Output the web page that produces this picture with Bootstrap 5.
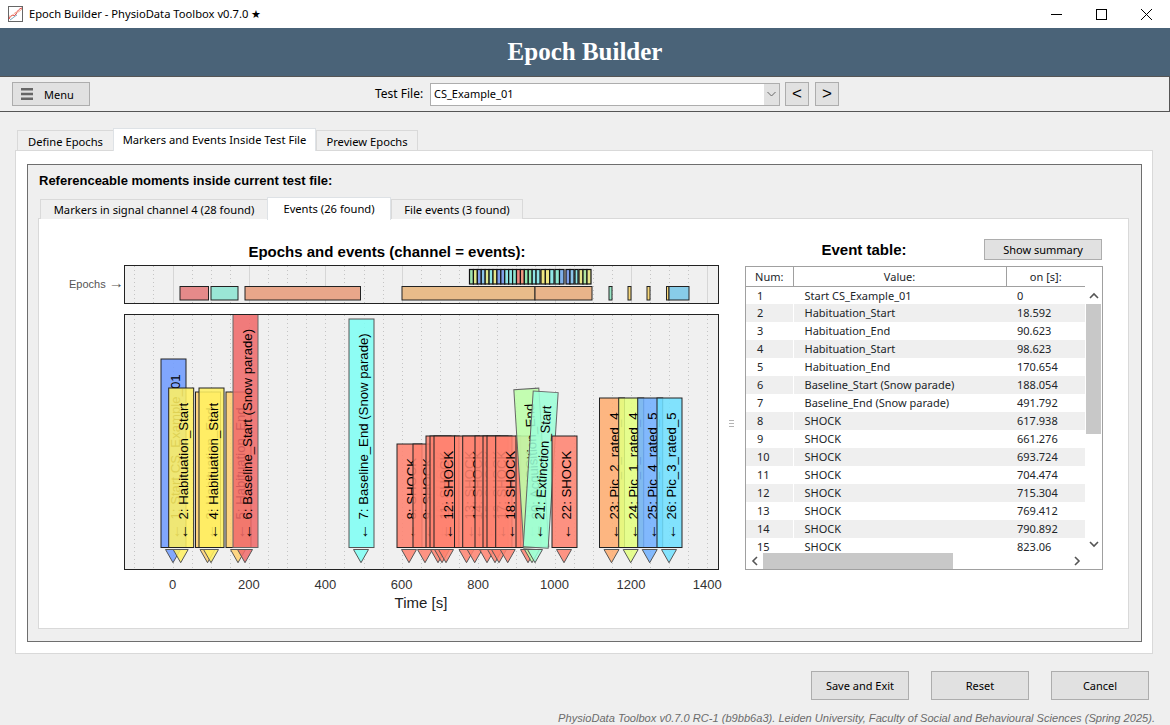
<!DOCTYPE html>
<html lang="en">
  <head>
    <meta charset="UTF-8" />
    <title>Epoch Builder</title>
    <link
      rel="stylesheet"
      href="https://cdn.jsdelivr.net/npm/bootstrap@5.3.0/dist/css/bootstrap.min.css"
    />
    <style>
      body {
        width: 1170px;
        height: 725px;
        overflow: hidden;
        background: #efefef;
        font-family: "Noto Sans", "Liberation Sans", sans-serif;
        font-size: 11px;
        color: #000;
      }
      .win-bar { height: 28px; background: #fff; padding-left: 8px; }
      .win-bar .win-title { margin-left: 6px; font-size: 11.2px; }
      .win-ctrls { margin-left: auto; padding-right: 18px; gap: 34px; }
      .app-head {
        height: 48px;
        background: #4a6378;
        color: #fff;
        font: bold 25px "Liberation Serif", serif;
      }
      .tool-bar {
        height: 36px;
        border: 1px solid #555;
        border-left: 0;
        padding-left: 12px;
      }
      .gui-btn {
        background: #e1e1e1;
        border: 1px solid #adadad;
        border-radius: 0;
        color: #000;
        font-size: 11px;
        padding: 0;
        line-height: 1;
      }
      .menu-btn { width: 78px; height: 24px; gap: 11px; padding-left: 8px; }
      .menu-bars { width: 12px; height: 12px; }
      .file-label { width: 55px; margin-left: 285px; font-size: 12px; white-space: nowrap; }
      .file-box {
        width: 350px;
        height: 23px;
        background: #fff;
        border: 1px solid #adadad;
        padding-left: 3px;
      }
      .file-caret { width: 15px; background: #e1e1e1; }
      .step-btn { width: 24px; height: 24px; font: 17px "Liberation Sans", sans-serif; }
      .prev-btn { margin-left: 5px; }
      .next-btn { margin-left: 6px; }

      .gui-tabs { border: 0; align-items: flex-end; }
      .gui-tabs .nav-link {
        border: 1px solid #d9d9d9;
        border-bottom: 0;
        border-radius: 0;
        margin: 0;
        padding: 0;
        background: #efefef;
        color: #000;
        font-size: 11.2px;
        height: 20px;
        line-height: 22px;
        text-align: center;
      }
      .gui-tabs .nav-link.active {
        background: #fff;
        height: 23px;
        line-height: 21px;
        border-bottom: 0;
        position: relative;
        z-index: 2;
        margin-bottom: -1px;
      }
      .outer-tabs { margin: 16px 0 0 17px; height: 22px; }
      .outer-tabs .tab-a { width: 97px; }
      .outer-tabs .tab-b { width: 203px; margin-left: -1px !important; }
      .outer-tabs .tab-c { width: 102px; margin-left: 0 !important; }
      .outer-panel {
        margin: 0 17px 0 15px;
        height: 504px;
        background: #fff;
        border: 1px solid #d9d9d9;
        padding: 13px 10px 0 11px;
      }
      .group-box {
        height: 478px;
        background: #efefef;
        border: 1px solid #6e6e6e;
        padding: 7px 12px 0 10px;
      }
      .group-title { font: bold 13px/17px "Liberation Sans", sans-serif; margin-left: 1px; }
      .inner-tabs { margin: 8px 0 0 2px; height: 21px; }
      .inner-tabs .nav-link { line-height: 20px; }
      .inner-tabs .tab-a { width: 228px; }
      .inner-tabs .tab-b { width: 124px; margin-left: -1px !important; }
      .inner-tabs .tab-c { width: 132px; }
      .inner-panel {
        height: 411px;
        background: #fff;
        border: 1px solid #d9d9d9;
      }
      .chart-svg { width: 690px; height: 409px; flex: none; }
      .chart-svg text { font-family: "Liberation Sans", Arial, sans-serif; }
      .split-grip { width: 16px; gap: 2px; }
      .split-grip i { width: 5px; height: 1px; background: #b4b4b4; display: block; }
      .table-col { width: 358px; padding-top: 20px; }
      .table-head { height: 21px; margin-bottom: 6px; }
      .table-title {
        font: bold 15px "Liberation Sans", sans-serif;
        width: 238px;
        text-align: center;
      }
      .summary-btn { width: 118px; height: 21px; margin-left: 1px; }

      .table-box {
        height: 304px;
        border: 1px solid #a0a0a0;
        background: #fff;
      }
      .table-clip { width: 339px; height: 285px; overflow: hidden; }
      .ev-table { table-layout: fixed; width: 339px; margin: 0; font-size: 11px; }
      .ev-table.table > thead > tr > th {
        height: 19px;
        padding: 0;
        font-weight: 400;
        text-align: center;
        border: 0;
        border-bottom: 1px solid #a0a0a0;
        border-right: 1px solid #a0a0a0;
        background: #fff;
        box-shadow: none;
      }
      .ev-table.table > thead > tr > th:last-child { border-right: 0; }
      .ev-table.table > tbody > tr > td {
        height: 18px;
        padding: 0 0 0 11px;
        line-height: 17px;
        border: 0;
        background: #fff;
        box-shadow: none;
        white-space: nowrap;
      }
      .ev-table.table > tbody > tr > td:first-child { border-right: 1px solid #fff; }
      .ev-table.table > tbody > tr:nth-child(even) > td { background: #efefef; }
      .hscroll { width: 339px; height: 17px; padding: 0 4px 0 5px; }
      .hscroll-thumb { width: 190px; height: 16px; margin-left: 4px; background: #c8c8c8; }
      .vscroll { width: 17px; margin-top: 20px; height: 265px; }
      .vscroll-thumb { height: 130px; width: 15px; margin: 0 auto; background: #c8c8c8; }
      .vscroll-end { height: 17px; }

      .action-row { margin-top: 17px; padding-right: 21px; gap: 22px; }
      .action-btn { width: 98px; height: 29px; }
      .foot-note {
        margin: 12px 15px 0 0;
        text-align: right;
        font: italic 11.1px "Liberation Sans", sans-serif;
        color: #6b6b6b;
      }
    </style>
  </head>
  <body>
    <div class="win-bar d-flex align-items-center">
      <svg width="15" height="16" viewBox="0 0 15 16">
        <rect x=".5" y=".5" width="14" height="15" fill="#fff" stroke="#666" />
        <path d="M1 13C4 6 6 12 8 8S11 3 14 2" fill="none" stroke="#d33" />
        <path d="M1 10C4 12 6 6 9 6s3-2 5-3" fill="none" stroke="#f2a58a" />
        <path d="M2 14C5 12 7 10 9 9" fill="none" stroke="#7ab" />
      </svg>
      <span class="win-title">Epoch Builder - PhysioData Toolbox v0.7.0 ★</span>
      <div class="win-ctrls d-flex align-items-center">
        <svg width="11" height="11" viewBox="0 0 11 11"><path d="M0 5.5h11" stroke="#000" /></svg>
        <svg width="11" height="11" viewBox="0 0 11 11"><rect x=".5" y=".5" width="10" height="10" fill="none" stroke="#000" /></svg>
        <svg width="11" height="11" viewBox="0 0 11 11"><path d="M0 0l11 11M11 0L0 11" stroke="#000" /></svg>
      </div>
    </div>

    <div class="app-head d-flex align-items-center justify-content-center">Epoch Builder</div>

    <div class="tool-bar d-flex align-items-center">
      <button class="btn gui-btn menu-btn d-flex align-items-center">
        <svg class="menu-bars" viewBox="0 0 12 12"><path d="M0 1.2h12M0 6h12M0 10.8h12" stroke="#666" stroke-width="2.4" /></svg>
        <span>Menu</span>
      </button>
      <span class="file-label">Test File:</span>
      <div class="file-box d-flex align-items-center">
        <span class="flex-grow-1">CS_Example_01</span>
        <span class="file-caret h-100 d-flex align-items-center justify-content-center">
          <svg width="9" height="6" viewBox="0 0 9 6"><path d="M.5 1l4 4 4-4" fill="none" stroke="#666" /></svg>
        </span>
      </div>
      <button class="btn gui-btn step-btn prev-btn">&lt;</button>
      <button class="btn gui-btn step-btn next-btn">&gt;</button>
    </div>

    <ul class="nav nav-tabs gui-tabs outer-tabs">
      <li class="nav-item tab-a"><a class="nav-link" href="#">Define Epochs</a></li>
      <li class="nav-item tab-b"><a class="nav-link active" href="#">Markers and Events Inside Test File</a></li>
      <li class="nav-item tab-c"><a class="nav-link" href="#">Preview Epochs</a></li>
    </ul>

    <div class="outer-panel">
      <div class="group-box">
        <div class="group-title">Referenceable moments inside current test file:</div>
        <ul class="nav nav-tabs gui-tabs inner-tabs">
          <li class="nav-item tab-a"><a class="nav-link" href="#">Markers in signal channel 4 (28 found)</a></li>
          <li class="nav-item tab-b"><a class="nav-link active" href="#">Events (26 found)</a></li>
          <li class="nav-item tab-c"><a class="nav-link" href="#">File events (3 found)</a></li>
        </ul>
        <div class="inner-panel d-flex">
          <svg id="chart" class="chart-svg" viewBox="39 219 690 409"></svg>
          <div class="split-grip d-flex flex-column align-items-start justify-content-center"><i></i><i></i><i></i></div>
          <div class="table-col">
            <div class="table-head d-flex align-items-center">
              <div class="table-title">Event table:</div>
              <button class="btn gui-btn summary-btn">Show summary</button>
            </div>
            <div class="table-box d-flex">
              <div>
                <div class="table-clip">
                  <table class="table ev-table">
                    <colgroup><col class="col-num" /><col class="col-val" /><col class="col-on" /></colgroup>
                    <thead>
                      <tr><th>Num:</th><th>Value:</th><th>on [s]:</th></tr>
                    </thead>
                    <tbody id="rows"></tbody>
                  </table>
                </div>
                <div class="hscroll d-flex align-items-center">
                  <svg width="8" height="10" viewBox="0 0 8 10"><path d="M6 1L2 5l4 4" fill="none" stroke="#555" stroke-width="1.6" /></svg>
                  <div class="hscroll-thumb"></div>
                  <svg class="ms-auto" width="8" height="10" viewBox="0 0 8 10"><path d="M2 1l4 4-4 4" fill="none" stroke="#555" stroke-width="1.6" /></svg>
                </div>
              </div>
              <div class="vscroll d-flex flex-column align-items-center">
                <div class="vscroll-end d-flex align-items-center"><svg width="10" height="8" viewBox="0 0 10 8"><path d="M1 6l4-4 4 4" fill="none" stroke="#555" stroke-width="1.6" /></svg></div>
                <div class="vscroll-thumb"></div>
                <div class="vscroll-end d-flex align-items-center mt-auto"><svg width="10" height="8" viewBox="0 0 10 8"><path d="M1 2l4 4 4-4" fill="none" stroke="#555" stroke-width="1.6" /></svg></div>
              </div>
            </div>
          </div>
        </div>
      </div>
    </div>

    <div class="action-row d-flex justify-content-end">
      <button class="btn gui-btn action-btn">Save and Exit</button>
      <button class="btn gui-btn action-btn">Reset</button>
      <button class="btn gui-btn action-btn">Cancel</button>
    </div>
    <div class="foot-note">PhysioData Toolbox v0.7.0 RC-1 (b9bb6a3). Leiden University, Faculty of Social and Behavioural Sciences (Spring 2025).</div>

    <script src="https://cdn.jsdelivr.net/npm/bootstrap@5.3.0/dist/js/bootstrap.bundle.min.js"></script>
    <script>
      // event table rows
      const tableRows = [
        ["Start CS_Example_01", "0"],
        ["Habituation_Start", "18.592"],
        ["Habituation_End", "90.623"],
        ["Habituation_Start", "98.623"],
        ["Habituation_End", "170.654"],
        ["Baseline_Start (Snow parade)", "188.054"],
        ["Baseline_End (Snow parade)", "491.792"],
        ["SHOCK", "617.938"],
        ["SHOCK", "661.276"],
        ["SHOCK", "693.724"],
        ["SHOCK", "704.474"],
        ["SHOCK", "715.304"],
        ["SHOCK", "769.412"],
        ["SHOCK", "790.892"],
        ["SHOCK", "823.06"],
      ];
      document.getElementById("rows").innerHTML = tableRows
        .map((r, i) => `<tr><td>${i + 1}</td><td>${r[0]}</td><td>${r[1]}</td></tr>`)
        .join("");
      const colWidths = { "col-num": 47, "col-val": 213, "col-on": 79 };
      Object.keys(colWidths).forEach((c) => {
        document.querySelector("." + c).style.width = colWidths[c] + "px";
      });

      // chart uses page coordinates through the viewBox
      const xOf = (t) => 172.5 + t * 0.382;
      let s = `<defs><clipPath id="mainClip"><rect x="124" y="314" width="594" height="255" /></clipPath></defs>`;

      s += `<text x="387" y="257" text-anchor="middle" font-size="15" font-weight="bold">Epochs and events (channel = events):</text>`;
      s += `<text x="69" y="288" font-size="11" fill="#555">Epochs <tspan font-size="15">→</tspan></text>`;

      function axesBg(y, h, solidMajors) {
        let out = `<rect x="124.5" y="${y + 0.5}" width="594" height="${h}" fill="#f0f0f0" />`;
        for (let t = -100; t <= 1400; t += 50) {
          const x = Math.round(xOf(t)) + 0.5;
          const major = solidMajors && t % 200 === 0;
          out += `<path d="M${x} ${y + 1}V${y + h}" stroke="${major ? "#d6d6d6" : "#c4c4c4"}" ${major ? "" : 'stroke-dasharray="1 3"'} />`;
        }
        return out;
      }
      const axesFrame = (y, h) => `<rect x="124.5" y="${y + 0.5}" width="594" height="${h}" fill="none" stroke="#222" />`;

      // epochs strip
      s += axesBg(265, 38, true);
      const epochBars = [
        [180, 208.5, "#e58a8a"], [211, 238, "#9ae6d6"], [245, 360.5, "#e8a68a"],
        [402, 535, "#e8bc8a"], [535, 592, "#e8b48a"], [609, 612, "#9ae6c6"],
        [628, 631, "#f5d67a"], [647, 650, "#f5d67a"], [666.5, 669, "#f5d67a"], [669, 689, "#88cce8"],
      ];
      epochBars.forEach((b) => {
        s += `<rect x="${b[0]}" y="286.5" width="${b[1] - b[0]}" height="13.5" fill="${b[2]}" stroke="#222" />`;
      });
      const stripeGroups = [
        [469.5, 540, ["#9fe3b0", "#dfe88e", "#7f9fe8", "#8cc4ea", "#dfe88e", "#8fe6e6", "#e6e68a", "#7f9fe8", "#7f9fe8", "#8fe6e6", "#8fe6e6", "#8fe6d0", "#f08a80", "#f09a80", "#8fe6b0", "#8fe6b0", "#8fe6e6", "#8fe6e6"]],
        [541, 554, ["#f0e680", "#f0e680", "#8fe6e6"]],
        [555, 564, ["#8fe6d0", "#7fb0e8"]],
        [566, 574, ["#7f9fe8", "#8cc4ea"]],
        [575, 578, ["#8fe6e6"]],
        [579, 591, ["#e6e68a", "#b0e6a0", "#e6e68a"]],
      ];
      stripeGroups.forEach((g) => {
        const w = (g[1] - g[0]) / g[2].length;
        g[2].forEach((c, i) => {
          s += `<rect x="${g[0] + i * w}" y="269.5" width="${w}" height="14.5" fill="${c}" stroke="#111" stroke-width="1.2" />`;
        });
      });
      s += axesFrame(265, 38);

      // main events axes
      s += axesBg(314, 255, false);

      const red = "#ff8370";
      const flags = [
        [1, "Start CS_Example_01", 173, 359, "#6f9bff"],
        [2, "Habituation_Start", 180.7, 388, "#fff060"],
        [3, "Habituation_End", 207.5, 392, "#ffd070"],
        [4, "Habituation_Start", 211, 388, "#fff060"],
        [5, "Habituation_End", 238, 392, "#ffd070"],
        [6, "Baseline_Start (Snow parade)", 245, 310, "#f06a6a", "#666"],
        [7, "Baseline_End (Snow parade)", 361, 319, "#7ffff5", "#555"],
        [8, "SHOCK", 409, 444, red],
        [9, "SHOCK", 425, 444, red],
        [10, "SHOCK", 438, 436, red],
        [11, "SHOCK", 442, 436, red],
        [12, "SHOCK", 446, 436, red],
        [13, "SHOCK", 466.5, 436, red],
        [14, "SHOCK", 474.7, 436, red],
        [15, "SHOCK", 487, 436, red],
        [16, "SHOCK", 495, 436, red],
        [17, "SHOCK", 499, 436, red],
        [18, "SHOCK", 507.7, 436, red],
        [19, "SHOCK", 528, 436, red],
        [20, "Acquisition_End", 535.8, 388.6, "#bcffa8", "#666", -3.6, 532],
        [21, "Extinction_Start", 535.2, 391.5, "#9cffd8", "#666", 3.67, 535],
        [22, "SHOCK", 564, 436, red],
        [23, "Pic_2_rated_4", 611.5, 398, "#ffad70"],
        [24, "Pic_1_rated_4", 630.7, 398, "#e3ff80"],
        [25, "Pic_4_rated_5", 649.7, 398, "#70b0ff"],
        [26, "Pic_3_rated_5", 669, 398, "#70e0ff"],
      ];

      s += `<g clip-path="url(#mainClip)">`;
      flags.forEach((f) => {
        const tip = f[7] || f[2];
        s += `<path d="M${tip - 7.5} 549.5H${tip + 7.5}L${tip} 562.7Z" fill="${f[4]}" fill-opacity=".85" stroke="#555" />`;
      });
      flags.forEach((f) => {
        const x = f[2];
        const rot = f[6] ? `transform="rotate(${f[6]} ${x} 547.5)"` : "";
        s += `<g ${rot}>`;
        s += `<rect x="${x - 12}" y="${f[3]}" width="25" height="${547.5 - f[3]}" fill="${f[4]}" fill-opacity=".87" stroke="${f[5] || "#222"}" />`;
        s += `<text transform="translate(${x + 7},539.5) rotate(-90)" font-size="13.2" fill="#000"><tspan font-size="16">←</tspan><tspan dx="4">${f[0]}: ${f[1]}</tspan></text>`;
        s += `</g>`;
      });
      s += `</g>`;
      s += axesFrame(314, 255);

      for (let t = 0; t <= 1400; t += 200) {
        s += `<text x="${xOf(t)}" y="589" text-anchor="middle" font-size="13" fill="#333">${t}</text>`;
      }
      s += `<text x="421" y="608" text-anchor="middle" font-size="15" fill="#222">Time [s]</text>`;
      document.getElementById("chart").innerHTML = s;
    </script>
  </body>
</html>
